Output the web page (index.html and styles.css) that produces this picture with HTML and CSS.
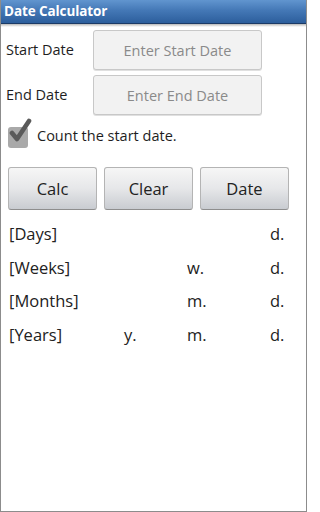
FILE: index.html
```html
<!DOCTYPE html>
<html>
<head>
<meta charset="utf-8">
<link rel="stylesheet" href="styles.css">
</head>
<body>
<div class="screen">
  <div class="titlebar">Date Calculator</div>
  <div class="shadow"></div>
  <div class="form">
    <div class="label">Start Date</div>
    <div class="input">Enter Start Date</div>
    <div class="label">End Date</div>
    <div class="input">Enter End Date</div>
  </div>
  <div class="check-row">
    <span class="checkbox">
      <svg width="26" height="28" viewBox="0 0 26 28">
        <path d="M5 15 L10 21 L22 3" fill="none" stroke="#5a5a5a" stroke-width="4.6" stroke-linecap="round" stroke-linejoin="round"/>
      </svg>
    </span>
    <span class="check-text">Count the start date.</span>
  </div>
  <div class="buttons">
    <div class="btn">Calc</div>
    <div class="btn">Clear</div>
    <div class="btn">Date</div>
  </div>
  <div class="results">
    <div>[Days]</div><div></div><div></div><div>d.</div>
    <div>[Weeks]</div><div></div><div>w.</div><div>d.</div>
    <div>[Months]</div><div></div><div>m.</div><div>d.</div>
    <div>[Years]</div><div>y.</div><div>m.</div><div>d.</div>
  </div>
</div>
</body>
</html>
```
FILE: styles.css
```css
html, body {
  margin: 0;
  padding: 0;
  background: #fff;
}
.screen {
  width: 307px;
  height: 512px;
  box-sizing: border-box;
  border: 1px solid #8c8c8c;
  border-top: none;
  font-family: "Open Sans", "DejaVu Sans", sans-serif;
  color: #1e1e1e;
  overflow: hidden;
}
.titlebar {
  height: 23px;
  line-height: 23px;
  padding-left: 3px;
  background: linear-gradient(#6195cf 0%, #4478b6 45%, #2c5e9c 100%);
  border-bottom: 1px solid #1b3a66;
  color: #fff;
  font-weight: bold;
  font-size: 13.5px;
  letter-spacing: -0.1px;
}
.shadow {
  height: 3px;
  background: linear-gradient(#b8b8b8, #fff);
}
.form {
  display: grid;
  grid-template-columns: 87px 169px;
  row-gap: 5px;
  padding-top: 3px;
  padding-left: 5px;
  align-items: center;
}
.label {
  font-size: 14.5px;
  padding-bottom: 2px;
}
.input {
  height: 38px;
  border: 1px solid #c8c8c8;
  border-radius: 3px;
  background: #f2f2f2;
  color: #8a8a8a;
  font-size: 14.5px;
  display: flex;
  align-items: center;
  justify-content: center;
  box-shadow: 0 1px 0 #e0e0e0;
}
.check-row {
  display: flex;
  align-items: center;
  padding-left: 7px;
  margin-top: 6px;
  height: 28px;
}
.checkbox {
  position: relative;
  width: 20px;
  height: 21px;
  background: #a9a9a9;
  border-radius: 3px;
  margin-top: 4px;
  margin-right: 9px;
}
.checkbox svg {
  position: absolute;
  left: -1px;
  top: -9px;
}
.check-text {
  font-size: 14.5px;
}
.buttons {
  display: flex;
  gap: 7px;
  padding-left: 7px;
  margin-top: 18px;
}
.btn {
  width: 87px;
  height: 41px;
  border: 1px solid #b4b4b4;
  border-bottom-color: #8e8e8e;
  border-radius: 3px;
  background: linear-gradient(#f6f6f6 0%, #e6e7e9 50%, #c9ccd1 100%);
  display: flex;
  align-items: center;
  justify-content: center;
  font-size: 16.5px;
  color: #222;
}
.results {
  display: grid;
  grid-template-columns: 115px 63px 83px auto;
  grid-auto-rows: 33.5px;
  align-items: center;
  padding-left: 8px;
  margin-top: 7px;
  font-size: 16.5px;
  color: #222;
}
```
